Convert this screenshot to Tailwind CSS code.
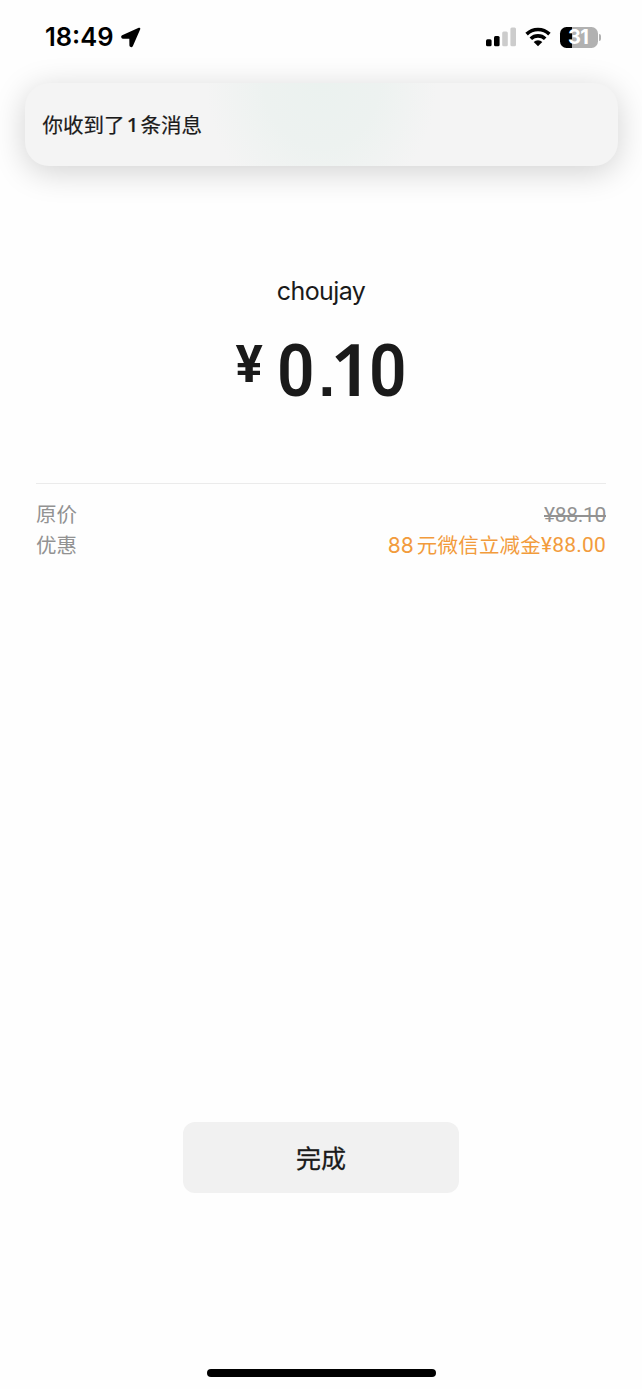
<!DOCTYPE html>
<html lang="zh-CN">
<head>
<meta charset="utf-8">
<title>支付结果</title>
<script src="https://cdn.jsdelivr.net/npm/@tailwindcss/browser@4"></script>
</head>
<body class="bg-white">
<div class="flex h-[1389px] w-[642px] flex-col items-center overflow-hidden bg-[#fefefe] font-['Inter','Noto_Sans_CJK_SC',sans-serif] text-[#1a1a1a]">
  <header class="flex h-[83px] w-full shrink-0 items-start justify-between pt-5 pr-[41px] pl-[45px] text-black">
    <div class="flex h-[34px] items-center gap-[7px]">
      <span class="w-[69px] text-[25.5px] leading-[34px] font-semibold whitespace-nowrap">18:49</span>
      <svg class="h-[21px] w-[20px]" viewBox="0 0 20 21"><path d="M18.2 1.8 1.6 9.3a.7.7 0 0 0 .3 1.3l7.5.1.1 7.7a.7.7 0 0 0 1.3.3z" fill="#000" stroke="#000" stroke-width="2.2" stroke-linejoin="round"/></svg>
    </div>
    <div class="flex h-[34px] items-center">
      <svg class="h-[20px] w-[30px]" viewBox="0 0 30 20"><rect x="0" y="12.3" width="5.6" height="6.9" rx="1.5"/><rect x="8" y="9" width="5.6" height="10.2" rx="1.5"/><rect x="16.2" y="4.5" width="5.6" height="14.7" rx="1.5" fill="#ccc"/><rect x="24.4" y="0.6" width="5.6" height="18.6" rx="1.5" fill="#ccc"/></svg>
      <svg class="ml-[9px] h-[20px] w-[26px]" viewBox="0 0 26 20"><g fill="none" stroke="#000" stroke-width="3.6"><path d="M1.6 7.1a16.4 16.4 0 0 1 22.8 0"/><path d="M5.8 11.8a10.3 10.3 0 0 1 14.4 0"/></g><path d="M8.7 15a5.9 5.9 0 0 1 8.6 0L13 19.3z"/></svg>
      <div class="ml-[9px] flex h-[21px] w-[38px] items-center justify-center rounded-[6.5px] bg-[linear-gradient(90deg,#000_12px,#b1b1b1_12px)] pr-[2px] text-[20px] leading-[21px] font-bold tracking-[-0.7px] text-white">31</div>
      <div class="ml-[1px] h-[7px] w-[2px] rounded-r-full bg-[#b1b1b1]"></div>
    </div>
  </header>

  <section class="flex h-[83px] w-[593px] shrink-0 items-center rounded-[24px] bg-[#f4f4f4] bg-[radial-gradient(ellipse_115px_130px_at_50%_0%,#ebf2ef_0%,#edf2f0_50%,#f4f4f400_100%)] pl-[18px] shadow-[0_6px_32px_rgba(0,0,0,0.18)]">
    <p class="flex items-start pt-[2px] text-[20.5px] leading-[30px] whitespace-nowrap [-webkit-text-stroke:0.2px_#1a1a1a]"><span>你收到了</span><span class="w-[16px] text-center font-['Noto_Sans',sans-serif] leading-[26px] font-medium">1</span><span>条消息</span></p>
  </section>

  <main class="flex w-[570px] flex-1 flex-col items-center">
    <h1 class="mt-[107px] text-[25px] leading-9 tracking-[-0.6px]">choujay</h1>
    <div class="mt-[17px] flex h-[88px] w-[171px] items-start font-['Roboto',sans-serif] font-semibold">
      <span class="mt-[9px] block w-[41px] shrink-0 text-[51px] leading-[60px] font-bold">¥</span>
      <div class="mt-[2px] flex items-baseline text-[73px] leading-[86px]">
        <span class="block w-[42px] shrink-0 origin-left scale-x-[0.9]">0</span>
        <p class="w-[50px] shrink-0 whitespace-nowrap"><span class="font-['Liberation_Sans',sans-serif] text-[60px] leading-none font-bold tracking-[-5px]">.</span><span class="font-['Noto_Sans',sans-serif] leading-none">1</span></p>
        <span class="block shrink-0 origin-left scale-x-[0.9]">0</span>
      </div>
    </div>
    <dl class="mt-[69px] w-full border-t border-[#ebebeb] pt-[15px] text-[20.5px] leading-[31px] text-[#929292]">
      <div class="flex justify-between"><dt>原价</dt><dd class="pt-px font-['Roboto',sans-serif] text-[21px] leading-[30px] tracking-[-0.3px] line-through">¥88.10</dd></div>
      <div class="flex justify-between"><dt>优惠</dt><dd class="flex text-[#f29b3c]"><span class="mr-[3px] text-[21px]">88</span><span class="tracking-[0.2px]">元微信立减金</span><span class="font-['Roboto',sans-serif] text-[21px] tracking-[0.2px]">¥88.00</span></dd></div>
    </dl>
  </main>

  <footer class="flex shrink-0 flex-col items-center">
    <button class="h-[71px] w-[276px] rounded-[12px] bg-[#f1f1f1] pt-1 text-[25px] [-webkit-text-stroke:0.3px_#1a1a1a]">完成</button>
    <div class="mt-[176px] mb-3 h-[8px] w-[229px] rounded-full bg-black"></div>
  </footer>
</div>
</body>
</html>
